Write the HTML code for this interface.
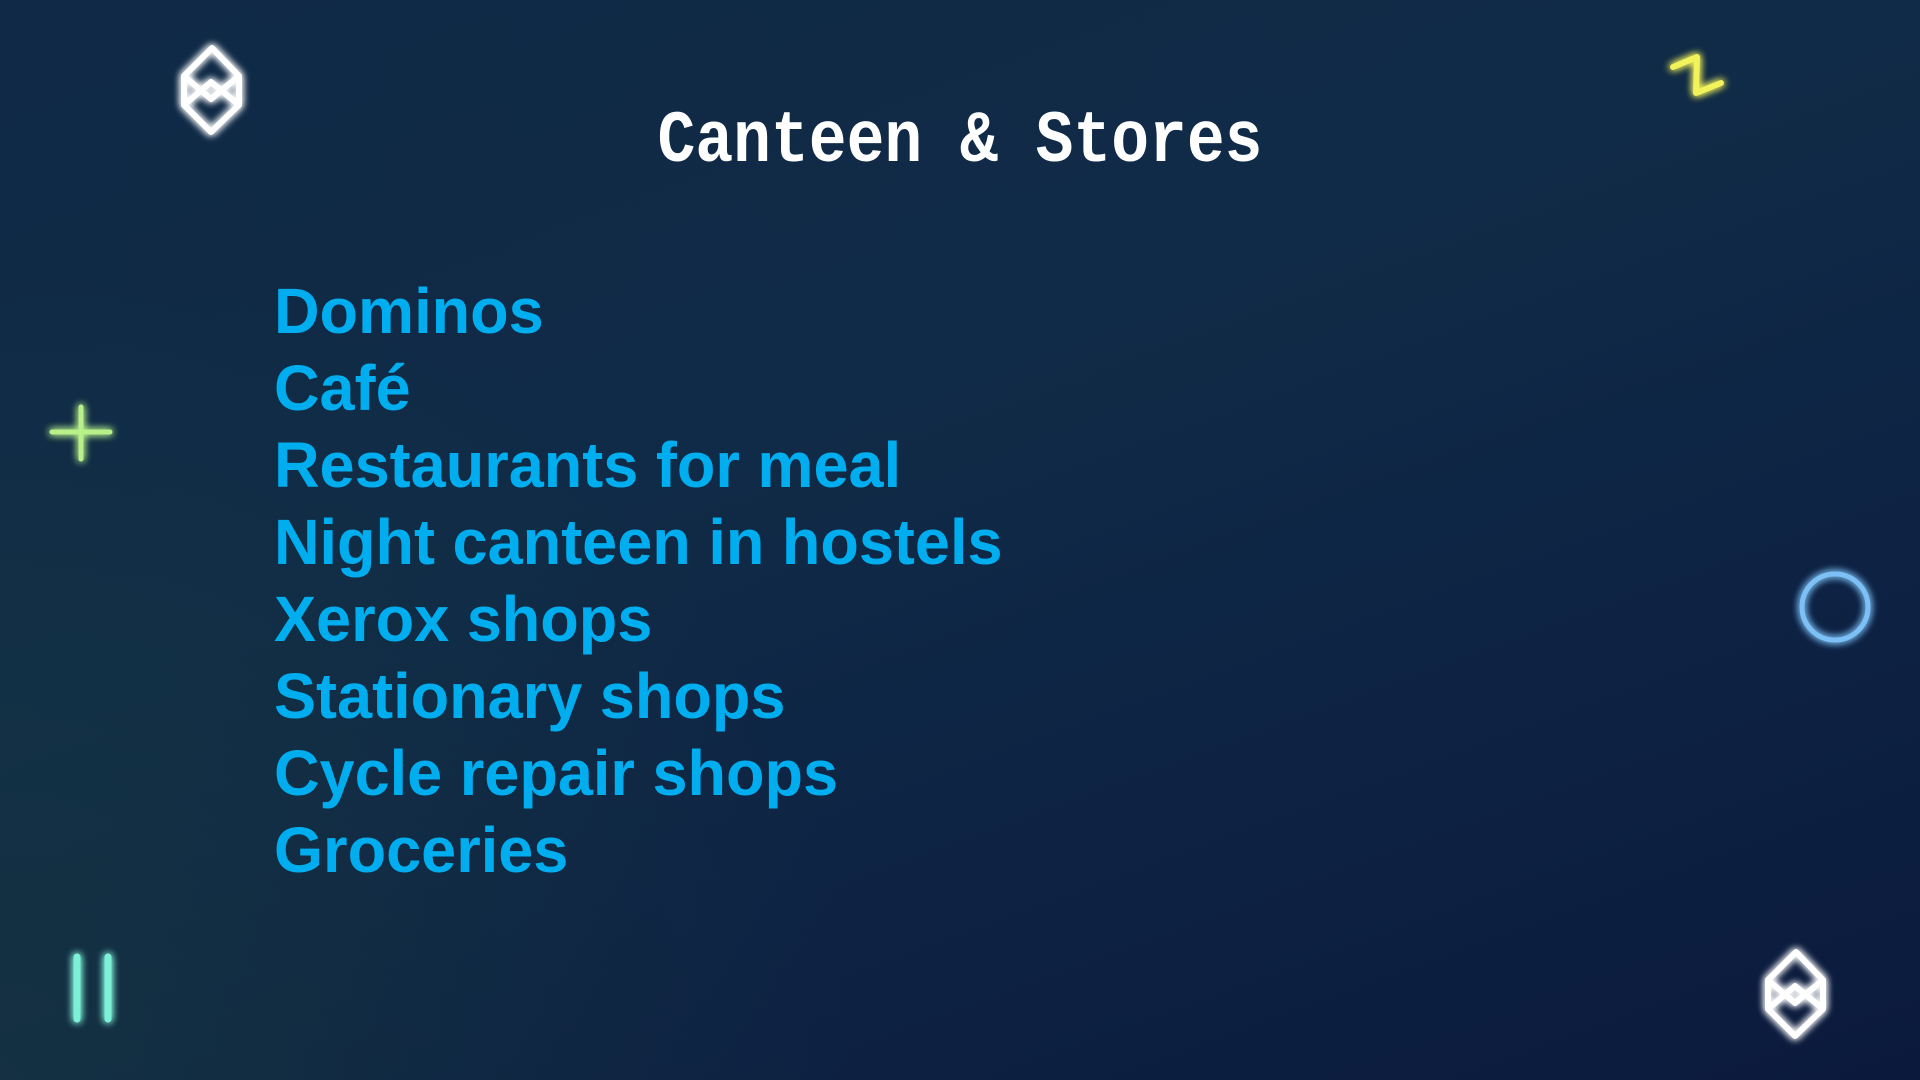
<!DOCTYPE html>
<html><head><meta charset="utf-8"><style>
html,body{margin:0;padding:0}
body{width:1920px;height:1080px;overflow:hidden;position:relative;
background:linear-gradient(160deg,#0f2946 0%,#102b47 40%,#0d2143 75%,#0b1a3c 100%);
font-family:"Liberation Sans",Arial,sans-serif}
.glow{position:absolute;left:0;top:0;width:1100px;height:1080px;background:radial-gradient(ellipse at 0% 100%,rgba(30,70,60,.35),rgba(0,0,0,0) 55%)}
h1{position:absolute;left:0;width:1920px;top:99px;margin:0;text-align:center;
font-family:"Liberation Mono",monospace;font-size:63px;font-weight:bold;color:#fff;line-height:80px;transform:scaleY(1.17);transform-origin:50% 22px}
ul{position:absolute;left:274px;top:273px;margin:0;padding:0;list-style:none}
li{font-size:64px;line-height:77px;font-weight:bold;color:#00aeef;white-space:nowrap;transform:scaleX(0.985);transform-origin:0 0}
svg{position:absolute;left:0;top:0}
</style></head><body>
<div class="glow"></div>
<h1>Canteen &amp; Stores</h1>
<ul>
<li>Dominos</li><li>Café</li><li>Restaurants for meal</li><li>Night canteen in hostels</li><li>Xerox shops</li><li>Stationary shops</li><li>Cycle repair shops</li><li>Groceries</li>
</ul>
<svg width="1920" height="1080">
<defs>
<filter id="g" x="-50%" y="-50%" width="200%" height="200%"><feGaussianBlur stdDeviation="4" result="b"/><feMerge><feMergeNode in="b"/><feMergeNode in="b"/><feMergeNode in="SourceGraphic"/></feMerge></filter>
<g id="d" fill="none" stroke="#fff" stroke-width="6" stroke-linejoin="round">
<path d="M212 48 L239 76 L239 105 L211 132 L184 105 L184 76 Z"/>
<path d="M184 76 L211 99 L239 76 M184 105 L211 82 L239 105"/>
</g>
</defs>
<g filter="url(#g)"><use href="#d"/></g>
<g filter="url(#g)" transform="translate(1584,904)"><use href="#d"/></g>
<g filter="url(#g)" fill="none" stroke-linecap="round" stroke-linejoin="round">
<path d="M1673 67 L1697 57 L1696 93 L1721 83" stroke="#f2f25a" stroke-width="6"/>
<path d="M81 407 V459 M52 432 H110" stroke="#b8f08a" stroke-width="5"/>
<circle cx="1835" cy="607" r="33" stroke="#7cc0f5" stroke-width="5"/>
<path d="M77 957 V1019 M108 957 V1019" stroke="#7ff0d8" stroke-width="7"/>
</g>
</svg>
</body></html>
